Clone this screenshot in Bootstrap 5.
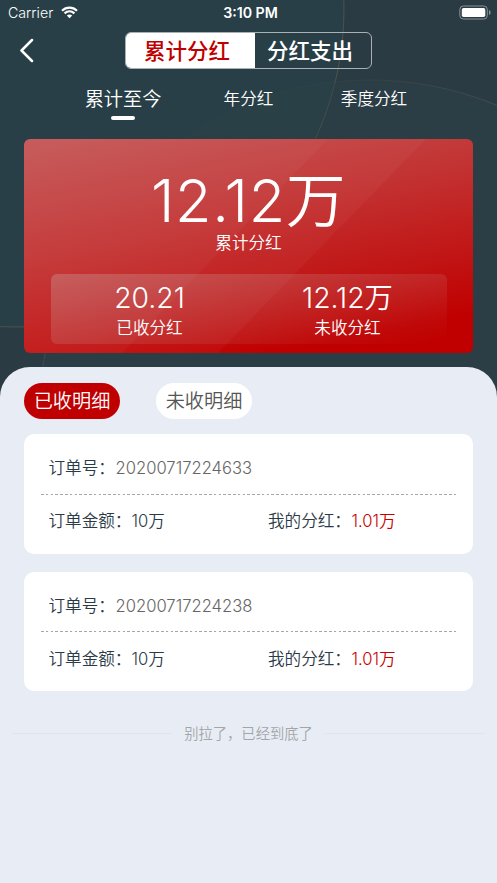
<!DOCTYPE html>
<html lang="zh-CN">
<head>
<meta charset="utf-8">
<meta name="viewport" content="width=device-width, initial-scale=1">
<title>累计分红</title>
<link href="https://cdn.jsdelivr.net/npm/bootstrap@5.3.0/dist/css/bootstrap.min.css" rel="stylesheet">
<style>
body{font-family:Inter,"Noto Sans CJK SC",sans-serif;background:#e8edf5;color:#2b3a47;font-size:16.6px;font-weight:350;height:883px;overflow:hidden}
.hero{height:400px;background:#2b3b44}
.hero-art{inset:0;z-index:0}
.status{height:25px;font-size:14.2px;line-height:25px;padding:0 6px 0 8px}
.topbar{height:52px}
.back{left:20px;top:13px}
.seg{width:247px;height:37px;margin-top:7px;border:1px solid #a9b1b5;border-radius:6px;overflow:hidden;font-size:21.5px;font-weight:500;line-height:36px}
.seg-on{background:#fff;color:#c00000;width:129px;padding-right:7px}
.seg-off{padding-right:6px}
.tabs{height:62px;line-height:24px;padding-top:10px}
.tabs .cell{width:125.5px}
.tabs .on{font-size:19.2px}
.tabs .on::after{content:"";display:block;width:24px;height:4px;border-radius:2px;background:#fff;margin:5px auto 0}
.total{height:213.5px;border-radius:6px;background:linear-gradient(169deg,rgba(200,180,180,.46),rgba(200,150,150,.33) 38%,rgba(200,120,120,0) 87%),#c00000;overflow:hidden}
.sum{font-size:59.5px;line-height:58px;padding-top:32px;height:93px;font-weight:350;letter-spacing:.7px}
.sub{line-height:22px}
.split{height:70px;width:396px;margin:20px auto 0;border-radius:6px;background:linear-gradient(167deg,rgba(200,180,180,.32),rgba(200,180,180,0) 97%)}
.num{font-size:28.3px;line-height:34px;padding-top:7px;height:43px}
.sheet{margin-top:-33px;height:516px;background:#e8edf5;border-radius:30px 30px 0 0;padding:16px 24px 0}
.pill{width:96px;height:36px;border-radius:18px;line-height:37px;font-size:19.2px}
.pills{gap:36px;margin-bottom:15.4px}
.pill-on{background:#c00000;color:#fff}
.pill-off{background:#fff;color:#555}
.order{height:119.5px;border-radius:10px;margin-bottom:18px;padding:0 17px}
.line1{height:59.4px;padding:22px 7.5px 0;line-height:24px}
.dash{height:1px;background:repeating-linear-gradient(90deg,#a7a7a7 0 2.6px,transparent 2.6px 4.8px)}
.line2{padding:14.7px 7.5px 0;line-height:24px}
.line2 .half{width:219.5px}
.code{color:#666;margin-left:.7px}
.red{color:#c80000;margin-left:.5px}
.end{font-size:14.3px;color:#a3a5a8;line-height:20px;margin:32.4px -12px 0}
.end i{height:1px;background:#e1e5e6;width:160px}
</style>
</head>
<body>
<header class="hero position-relative text-white">
  <svg class="hero-art position-absolute" width="497" height="400" fill="none">
    <defs><linearGradient id="edge"><stop offset="0" stop-color="#65604f" stop-opacity=".4"/><stop offset=".2" stop-color="#65604f" stop-opacity="0"/><stop offset=".45" stop-color="#65604f" stop-opacity=".1"/><stop offset=".8" stop-color="#65604f" stop-opacity=".6"/></linearGradient></defs>
    <ellipse cx="15" cy="9" rx="329" ry="318" fill="#2a4148" fill-opacity=".7" stroke="#65604f" stroke-opacity=".6"/>
    <circle cx="370" cy="410" r="330" fill="#2a4148" fill-opacity=".3" stroke="url(#edge)"/>
  </svg>
  <div class="position-relative">
    <div class="status d-flex justify-content-between position-relative">
      <div class="d-flex align-items-center"><span>Carrier</span>
        <svg class="ms-2" width="17" height="13" viewBox="0 0 17 13" fill="none" stroke="#fff" stroke-width="2.2"><path d="M1 4.7C5.3.5 11.7.5 16 4.7M3.6 7.4c2.9-2.7 6.9-2.7 9.8 0"/><path d="M8.5 12.3 5.8 9.6c1.6-1.4 3.8-1.4 5.4 0z" fill="#fff" stroke="none"/></svg>
      </div>
      <b class="position-absolute start-50 translate-middle-x fw-semibold text-nowrap ps-1">3:10 PM</b>
      <svg class="mt-1" width="34" height="17" viewBox="0 0 34 17"><rect x="2.8" y="2" width="27.5" height="13" rx="3.5" fill="none" stroke="#899398"/><rect x="4.8" y="4" width="23.5" height="9" rx="1.8" fill="#fff"/><path d="M32 6c2.2.7 2.2 4.3 0 5z" fill="#899398"/></svg>
    </div>
    <nav class="topbar d-flex justify-content-center position-relative">
      <svg class="back position-absolute" width="14" height="25" fill="none" stroke="#fff" stroke-width="2.5" stroke-linecap="round" stroke-linejoin="round"><path d="M12 2 1.5 12.5 12 23"/></svg>
      <div class="seg d-flex text-center"><div class="seg-on">累计分红</div><div class="seg-off flex-fill">分红支出</div></div>
    </nav>
    <div class="tabs d-flex justify-content-center text-center"><div class="cell on">累计至今</div><div class="cell">年分红</div><div class="cell">季度分红</div></div>
    <section class="total mx-4 text-center position-relative">
      <svg class="position-absolute top-0 start-0" width="449" height="214"><path d="M0 0H304L98 214H0z" fill="#fff" fill-opacity=".03"/><path d="M0 0H402L194 214H0z" fill="#fff" fill-opacity=".035"/></svg>
      <div class="position-relative">
        <div class="sum">12.12万</div>
        <div class="sub">累计分红</div>
        <div class="split d-flex"><div class="w-50"><div class="num">20.21</div><div class="sub">已收分红</div></div><div class="w-50"><div class="num">12.12万</div><div class="sub">未收分红</div></div></div>
      </div>
    </section>
  </div>
</header>
<main class="sheet position-relative">
  <div class="pills d-flex text-center"><div class="pill pill-on">已收明细</div><div class="pill pill-off">未收明细</div></div>
  <article class="order bg-white"><div class="line1">订单号：<span class="code">20200717224633</span></div><div class="dash"></div><div class="line2 d-flex"><div class="half">订单金额：10万</div><div>我的分红：<span class="red">1.01万</span></div></div></article>
  <article class="order bg-white"><div class="line1">订单号：<span class="code">20200717224238</span></div><div class="dash"></div><div class="line2 d-flex"><div class="half">订单金额：10万</div><div>我的分红：<span class="red">1.01万</span></div></div></article>
  <div class="end d-flex align-items-center justify-content-between"><i></i><span>别拉了，已经到底了</span><i></i></div>
</main>
<script src="https://cdn.jsdelivr.net/npm/bootstrap@5.3.0/dist/js/bootstrap.bundle.min.js"></script>
</body>
</html>
